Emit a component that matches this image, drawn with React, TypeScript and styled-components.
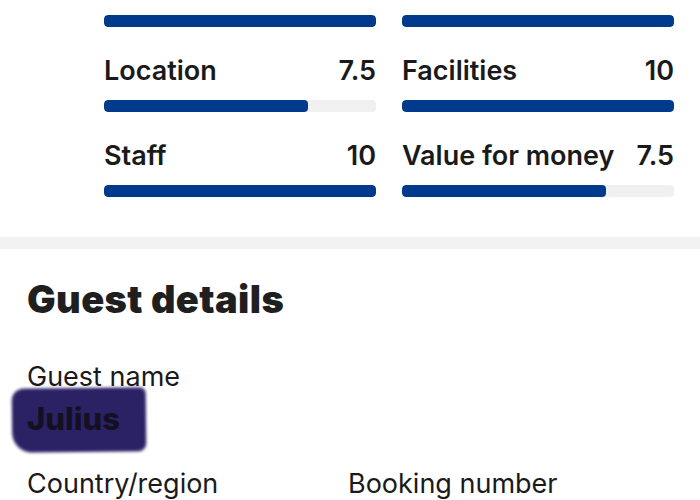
import styled, { createGlobalStyle } from 'styled-components';

const GlobalStyle = createGlobalStyle`
    body {
        margin: 0;
        background: #ffffff;
        font-family: Inter, "Noto Sans", sans-serif;
        color: #1a1a1a;
        overflow: hidden;
    }
`

type Score = { label: string; value: string; percent: number }

const scores: Score[][] = [
    [
        { label: 'Location', value: '7.5', percent: 75 },
        { label: 'Facilities', value: '10', percent: 100 },
    ],
    [
        { label: 'Staff', value: '10', percent: 100 },
        { label: 'Value for money', value: '7.5', percent: 75 },
    ],
]

const App = () => {
    return (
        <>
            <GlobalStyle />
            <Scores>
                <Grid>
                    <Bar><Fill $percent={100} /></Bar>
                    <Bar><Fill $percent={100} /></Bar>
                </Grid>
                {scores.map((row, i) => (
                    <Grid key={i}>
                        {row.map((s) => (
                            <Item key={s.label}>
                                <LabelRow>
                                    <span>{s.label}</span>
                                    <span>{s.value}</span>
                                </LabelRow>
                                <Bar><Fill $percent={s.percent} /></Bar>
                            </Item>
                        ))}
                    </Grid>
                ))}
            </Scores>
            <Divider />
            <Details>
                <Heading>Guest details</Heading>
                <Field>
                    <FieldLabel>Guest name</FieldLabel>
                    <FieldValue>
                        <Redacted>Julius</Redacted>
                    </FieldValue>
                </Field>
                <TwoCols>
                    <FieldLabel>Country/region</FieldLabel>
                    <FieldLabel>Booking number</FieldLabel>
                </TwoCols>
            </Details>
        </>
    )
}

const Scores = styled.section`
    padding: 15px 26px 40px 104px;
`

const Grid = styled.div`
    display: grid;
    grid-template-columns: 272px 272px;
    column-gap: 26px;
    & + & {
        margin-top: 29px;
    }
`

const Item = styled.div`
    display: flex;
    flex-direction: column;
    gap: 14px;
`

const LabelRow = styled.div`
    display: flex;
    justify-content: space-between;
    font-size: 27px;
    line-height: 30px;
    font-weight: 600;
    white-space: nowrap;
`

const Bar = styled.div`
    height: 12px;
    background: #f0f0f0;
    border-radius: 4px;
    overflow: hidden;
`

const Fill = styled.div<{ $percent: number }>`
    height: 100%;
    width: ${(p) => p.$percent}%;
    background: #003a8c;
    border-radius: 4px;
`

const Divider = styled.div`
    height: 12px;
    background: #f2f2f2;
`

const Details = styled.section`
    padding: 28px 27px 0 27px;
`

const Heading = styled.h2`
    margin: 0 0 40px;
    font-size: 38px;
    line-height: 44px;
    font-weight: 900;
    letter-spacing: 0.4px;
    color: #1f1f1f;
`

const Field = styled.div`
    display: flex;
    flex-direction: column;
    margin-bottom: 29px;
`

const FieldLabel = styled.div`
    font-size: 27px;
    line-height: 32px;
    font-weight: 400;
`

const FieldValue = styled.div`
    margin-top: 6px;
    font-size: 31px;
    line-height: 40px;
    font-weight: 800;
`

const Redacted = styled.span`
    position: relative;
    z-index: 0;
    display: inline-block;
    color: #141022;
    &::before {
        content: '';
        position: absolute;
        z-index: -1;
        left: -15px;
        right: -26px;
        top: -11px;
        bottom: -13px;
        background: #2b2266;
        border-radius: 12px 6px 8px 20px;
        filter: blur(1.5px);
        transform: rotate(-0.6deg);
    }
`

const TwoCols = styled.div`
    display: grid;
    grid-template-columns: 321px 1fr;
`

export default App;
